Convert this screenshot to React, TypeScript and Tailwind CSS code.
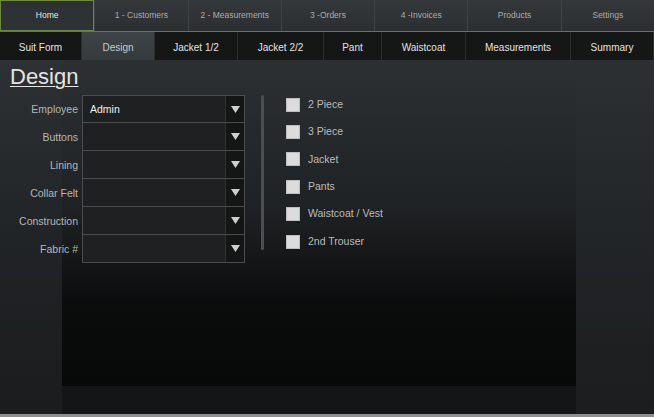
import React from "react";

const top = ["Home", "1 - Customers", "2 - Measurements", "3 -Orders", "4 -Invoices", "Products", "Settings"];
const tabs: [string, number][] = [
  ["Suit Form", 82],
  ["Design", 73],
  ["Jacket 1/2", 83],
  ["Jacket 2/2", 86],
  ["Pant", 58],
  ["Waistcoat", 84],
  ["Measurements", 105],
  ["Summary", 83],
];
const fields = ["Employee", "Buttons", "Lining", "Collar Felt", "Construction", "Fabric #"];
const checks = ["2 Piece", "3 Piece", "Jacket", "Pants", "Waistcoat / Vest", "2nd Trouser"];

function Arrow() {
  return (
    <svg width="9" height="7" viewBox="0 0 9 7">
      <polygon points="0,0 9,0 4.5,7" fill="#cfcfcf" />
    </svg>
  );
}

export default function App() {
  return (
    <div
      className="relative w-[654px] h-[417px] overflow-hidden bg-[#1d2022] text-[#d0d0d0]"
      style={{ fontFamily: '"Liberation Sans", Arial, sans-serif' }}
    >
      {/* background decoration */}
      <div className="absolute left-[62px] top-[60px] w-[514px] h-[326px] bg-[linear-gradient(to_bottom,#2c3033_0%,#1f2224_45%,#0b0c0c_75%,#070808_100%)]" />
      <div className="absolute left-0 top-[60px] w-[62px] h-[354px] bg-[linear-gradient(to_bottom,#2d3134_0%,#212426_50%,#1a1c1d_100%)]" />
      <div className="absolute left-[576px] top-[60px] w-[78px] h-[354px] bg-[linear-gradient(to_bottom,#2c3033_0%,#222527_50%,#1b1d1e_100%)]" />
      <div className="absolute left-[62px] top-[386px] w-[514px] h-[28px] bg-[#141516]" />

      <div className="relative flex flex-col h-full">
        {/* top nav */}
        <div className="flex h-[31px] bg-[linear-gradient(to_bottom,#34383a,#2c2f31)]">
          {top.map((t, i) => (
            <div
              key={t}
              className={
                "flex-1 flex items-center justify-center text-[8.5px] " +
                (i === 0
                  ? "border border-[#6b8a3c] bg-[#2f3234] text-[#e6e6e6]"
                  : "border-l border-[#3e4244] text-[#a9acad]")
              }
            >
              {t}
            </div>
          ))}
        </div>
        <div className="h-[1px] bg-[#6b6f71]" />
        {/* second nav */}
        <div className="flex h-[28px] bg-[#151616]">
          {tabs.map(([t, w], i) => (
            <div
              key={t}
              style={{ width: w }}
              className={
                "flex items-center justify-center pt-[3px] text-[10px] border-r border-[#2c2d2e] " +
                (i === 1
                  ? "bg-[linear-gradient(to_bottom,#3e4347,#353a3d)] text-[#c8cacb]"
                  : "text-[#e2e2e2]")
              }
            >
              {t}
            </div>
          ))}
        </div>

        {/* heading */}
        <div className="pl-[10px] pt-[4px] h-[35px]">
          <span className="text-[22px] leading-[26px] text-[#e4e4e4] underline underline-offset-[2px] decoration-1">
            Design
          </span>
        </div>

        <div className="flex">
          {/* form */}
          <div className="flex flex-col">
            {fields.map((f, i) => (
              <div key={f} className="flex items-center h-[28px]">
                <div className="w-[78px] pt-[2px] text-right text-[10.5px] text-[#b4b6b7]">{f}</div>
                <div
                  className={
                    "ml-[4px] w-[163px] h-[29px] flex border border-[#4a4c4d] bg-[#1f2021] " +
                    (i > 0 ? "-mt-px" : "")
                  }
                >
                  <div className="flex-1 flex items-center pl-[7px] pt-[1px] text-[10.5px] text-[#f0f0f0]">
                    {i === 0 ? "Admin" : ""}
                  </div>
                  <div className="w-[19px] flex items-center justify-center bg-[#141515] border-l border-[#2f3030]">
                    <Arrow />
                  </div>
                </div>
              </div>
            ))}
          </div>

          {/* divider */}
          <div className="ml-[16px] w-[3px] h-[155px] rounded-sm bg-[#4b4f52]" />

          {/* checkboxes */}
          <div className="ml-[22px] -mt-[4px] flex flex-col">
            {checks.map((c) => (
              <div key={c} className="flex items-center h-[27.4px]">
                <div className="w-[14px] h-[14px] bg-[#dcdcdc] border border-[#bdbdbd]" />
                <span className="ml-[8px] text-[10.5px] text-[#b9bbbc]">{c}</span>
              </div>
            ))}
          </div>
        </div>
      </div>

      <div className="absolute left-0 bottom-0 w-full h-[3px] bg-[#8c8e8f]" />
    </div>
  );
}
